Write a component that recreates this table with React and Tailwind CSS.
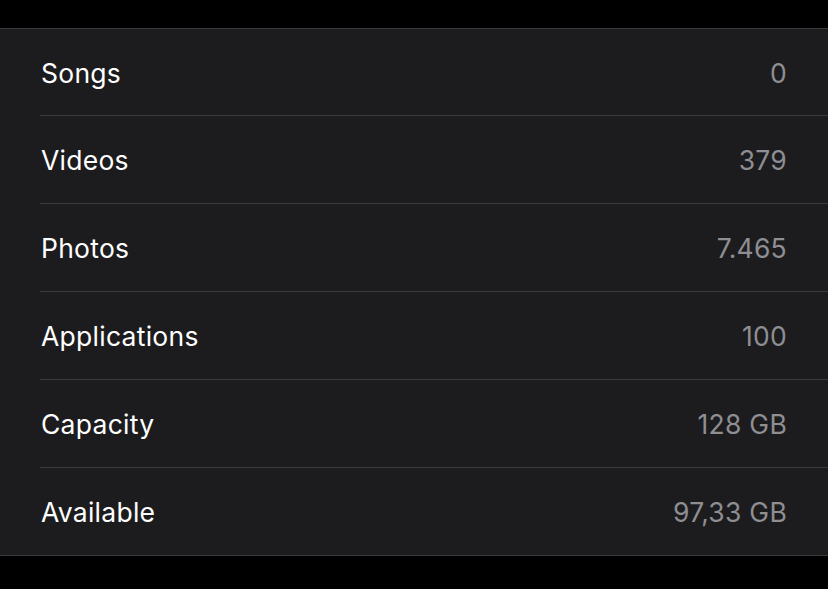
import React from 'react';

const ROWS = [
  { label: 'Songs', value: '0' },
  { label: 'Videos', value: '379' },
  { label: 'Photos', value: '7.465' },
  { label: 'Applications', value: '100' },
  { label: 'Capacity', value: '128 GB' },
  { label: 'Available', value: '97,33 GB' },
];

const App = () => {
  return (
    <div className="w-[828px] h-[589px] bg-black overflow-hidden font-['Inter',sans-serif]">
      <div className="h-[28px]" />
      <div className="bg-[#1c1c1e] border-y border-[#3a3a3c]">
        {ROWS.map((row, i) => (
          <div key={row.label} className="pl-10">
            <div
              className={`flex items-center justify-between pl-px pr-[41px] pt-[3px] ${
                i === 0 ? 'h-[83px]' : 'h-[84px]'
              } ${i < ROWS.length - 1 ? 'border-b border-[#3a3a3c] box-content' : 'box-content'}`}
            >
              <span className="text-[26.5px] text-white tracking-[0.01em]">{row.label}</span>
              <span className="text-[26.5px] text-[#8e8e93] tracking-[0.01em]">{row.value}</span>
            </div>
          </div>
        ))}
      </div>
    </div>
  );
};

export default App;
